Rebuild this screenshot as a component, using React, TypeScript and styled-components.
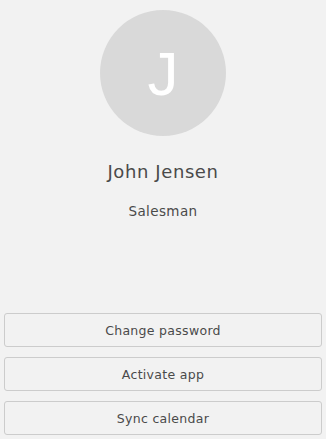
import React from "react";
import styled, { createGlobalStyle } from "styled-components";

const Global = createGlobalStyle`
  html, body { margin: 0; padding: 0; background: #f2f2f2; }
  body { font-family: "DejaVu Sans", "Noto Sans", sans-serif; }
  * { box-sizing: border-box; }
`;

const Page = styled.div`
  height: 439px;
  display: flex;
  flex-direction: column;
  background: #f2f2f2;
  padding: 10px 4px 4px;
`;

const Profile = styled.div`
  display: flex;
  flex-direction: column;
  align-items: center;
  flex: 1;
`;

const Avatar = styled.div`
  width: 126px;
  height: 126px;
  border-radius: 50%;
  background: #d9d9d9;
  color: #ffffff;
  display: flex;
  align-items: center;
  justify-content: center;
  font-family: "Liberation Sans", sans-serif;
  font-weight: 400;
  font-size: 62px;
  line-height: 1;
  padding-top: 2px;
`;

const Name = styled.div`
  margin-top: 25px;
  font-size: 18px;
  line-height: 22px;
  color: #4a4a4a;
  letter-spacing: 0.6px;
`;

const Role = styled.div`
  margin-top: 20px;
  font-size: 13.5px;
  line-height: 16px;
  color: #4a4a4a;
  letter-spacing: 0.4px;
`;

const Actions = styled.div`
  display: flex;
  flex-direction: column;
  gap: 10px;
`;

const Button = styled.button`
  height: 34px;
  width: 100%;
  background: #f2f2f2;
  border: 1px solid #cccccc;
  border-radius: 3px;
  font-family: "DejaVu Sans", sans-serif;
  font-size: 12.5px;
  letter-spacing: 0.3px;
  color: #4a4a4a;
  cursor: pointer;
`;

export default function App() {
  return (
    <>
      <Global />
      <Page>
        <Profile>
          <Avatar>J</Avatar>
          <Name>John Jensen</Name>
          <Role>Salesman</Role>
        </Profile>
        <Actions>
          <Button>Change password</Button>
          <Button>Activate app</Button>
          <Button>Sync calendar</Button>
        </Actions>
      </Page>
    </>
  );
}
